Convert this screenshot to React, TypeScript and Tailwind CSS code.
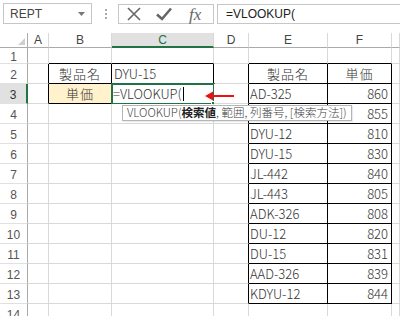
import React from 'react';

type Col = { k: string; w: string };
const COLS: Col[] = [
  { k: 'A', w: 'w-[21px]' },
  { k: 'B', w: 'w-[63px]' },
  { k: 'C', w: 'w-[102px]' },
  { k: 'D', w: 'w-[35px]' },
  { k: 'E', w: 'w-[79px]' },
  { k: 'F', w: 'w-[64px]' },
  { k: 'G', w: 'w-[8px]' },
];

const TABLE: Record<number, [string, string]> = {
  2: ['製品名', '単価'],
  3: ['AD-325', '860'],
  4: ['', '855'],
  5: ['DYU-12', '810'],
  6: ['DYU-15', '830'],
  7: ['JL-442', '840'],
  8: ['JL-443', '805'],
  9: ['ADK-326', '808'],
  10: ['DU-12', '820'],
  11: ['DU-15', '831'],
  12: ['AAD-326', '839'],
  13: ['KDYU-12', '844'],
};

const inBox = (r: number, c: string) =>
  (r >= 2 && r <= 3 && (c === 'B' || c === 'C')) ||
  (r >= 2 && r <= 13 && (c === 'E' || c === 'F'));

const nextCol = (c: string) => {
  const i = COLS.findIndex((x) => x.k === c);
  return i >= 0 && i < COLS.length - 1 ? COLS[i + 1].k : '';
};

const cellFont = { fontFamily: '"Noto Sans CJK JP", "Noto Sans", sans-serif' };

function CellContent({ r, c }: { r: number; c: string }) {
  if (r === 2 && c === 'B') return <span className="w-full text-center tracking-[1px]">製品名</span>;
  if (r === 2 && c === 'C') return <span className="pl-[2px]">DYU-15</span>;
  if (r === 3 && c === 'B') return <span className="w-full text-center tracking-[1px]">単価</span>;
  if (r === 3 && c === 'C')
    return (
      <>
        <span className="pl-[1px] flex items-center">
          =VLOOKUP(
          <span className="inline-block w-[1px] h-[14px] bg-black ml-[1px]" />
        </span>
        <div className="absolute -left-[1px] -top-[1px] w-[104px] h-[22px] border-2 border-[#217346]" />
        <div className="absolute left-[99px] top-[17px] w-[6px] h-[6px] bg-[#217346] border border-white" />
      </>
    );
  const t = TABLE[r];
  if (t && c === 'E') {
    if (r === 2) return <span className="w-full text-center tracking-[1px]">{t[0]}</span>;
    return <span className="pl-[1px]">{t[0]}</span>;
  }
  if (t && c === 'F') {
    if (r === 2) return <span className="w-full text-center tracking-[1px]">{t[1]}</span>;
    return <span className="w-full text-right pr-[3px]">{t[1]}</span>;
  }
  return null;
}

function Row({ r }: { r: number }) {
  const h = r === 1 ? 'h-[16px]' : 'h-[20px]';
  const sel = r === 3;
  return (
    <div className={`flex shrink-0 ${h}`}>
      <div
        className={`w-[28px] shrink-0 flex items-center justify-center border-b border-b-[#e0e0e0] text-[12px] ${
          sel ? 'bg-[#e1e1e1] border-r-2 border-r-[#217346] text-[#333]' : 'bg-white border-r border-r-[#ababab] text-[#555]'
        }`}
        style={{ fontFamily: '"Liberation Sans", Arial, sans-serif' }}
      >
        <span className="pt-[2px]">{r}</span>
      </div>
      {COLS.map((col) => {
        const rB = inBox(r, col.k) || inBox(r, nextCol(col.k));
        const bB = inBox(r, col.k) || inBox(r + 1, col.k);
        const yellow = r === 3 && col.k === 'B';
        return (
          <div
            key={col.k}
            className={`relative shrink-0 ${col.w} flex items-center overflow-visible whitespace-nowrap text-[13px] font-light text-[#333] border-r border-b ${
              rB ? 'border-r-black' : 'border-r-[#d9d9d9]'
            } ${bB ? 'border-b-black' : 'border-b-[#d9d9d9]'} ${yellow ? 'bg-[#fff2cc]' : 'bg-white'}`}
            style={cellFont}
          >
            <CellContent r={r} c={col.k} />
          </div>
        );
      })}
    </div>
  );
}

export default function App() {
  const rows = Array.from({ length: 14 }, (_, i) => i + 1);
  return (
    <div className="relative w-[400px] h-[316px] overflow-hidden bg-white">
      {/* formula bar */}
      <div className="flex items-start h-[33px] bg-white">
        <div
          className="ml-[3px] mt-[3px] w-[89px] h-[21px] border border-[#c6c6c6] bg-white flex items-center justify-between pl-[6px] pr-[6px] text-[12px] text-[#444]"
          style={{ fontFamily: '"Liberation Sans", Arial, sans-serif' }}
        >
          <span>REPT</span>
          <svg width="7" height="4" viewBox="0 0 7 4">
            <path d="M0 0 L7 0 L3.5 4 Z" fill="#777" />
          </svg>
        </div>
        <div className="ml-[13px] mt-[9px] flex flex-col gap-[2px]">
          <div className="w-[2px] h-[2px] bg-[#aaa]" />
          <div className="w-[2px] h-[2px] bg-[#aaa]" />
          <div className="w-[2px] h-[2px] bg-[#aaa]" />
        </div>
        <div className="ml-[11px] mt-[4px] w-[96px] h-[20px] border border-[#c6c6c6] bg-white flex items-center">
          <svg className="ml-[8px]" width="14" height="14" viewBox="0 0 14 14">
            <path d="M1 1 L13 13 M13 1 L1 13" stroke="#666" strokeWidth="1.6" fill="none" />
          </svg>
          <svg className="ml-[15px]" width="16" height="14" viewBox="0 0 16 14">
            <path d="M1 7.5 L6 12 L15 1.5" stroke="#666" strokeWidth="2.6" fill="none" />
          </svg>
          <span
            className="ml-[17px] text-[17px] italic text-[#666] leading-none"
            style={{ fontFamily: '"Liberation Serif", "Times New Roman", serif' }}
          >
            fx
          </span>
        </div>
        <div
          className="ml-[3px] mt-[4px] flex-1 h-[20px] border border-r-0 border-[#c6c6c6] bg-white flex items-center pl-[8px] text-[12px] text-[#222]"
          style={{ fontFamily: '"Liberation Sans", Arial, sans-serif' }}
        >
          =VLOOKUP(
        </div>
      </div>

      {/* column headers */}
      <div
        className="flex h-[15px] text-[12px] text-[#444]"
        style={{ fontFamily: '"Liberation Sans", Arial, sans-serif' }}
      >
        <div className="w-[28px] shrink-0 border-r border-r-[#ababab] border-b border-b-[#ababab] flex items-end justify-end pr-[2px] pb-[2px]">
          <svg width="7" height="7" viewBox="0 0 7 7">
            <path d="M7 0 L7 7 L0 7 Z" fill="#cfcfcf" />
          </svg>
        </div>
        {COLS.map((col) => (
          <div
            key={col.k}
            className={`shrink-0 ${col.w} flex items-center justify-center border-r border-r-[#d9d9d9] ${
              col.k === 'C'
                ? 'bg-[#e1e1e1] border-b-2 border-b-[#217346] text-[#217346]'
                : 'bg-white border-b border-b-[#ababab]'
            }`}
          >
            {col.k === 'G' ? '' : col.k}
          </div>
        ))}
      </div>

      {rows.map((r) => (
        <Row key={r} r={r} />
      ))}

      {/* red arrow */}
      <svg className="absolute left-[204px] top-[90px]" width="32" height="12" viewBox="0 0 32 12">
        <path d="M6 6 L30 6" stroke="#ee1111" strokeWidth="2" />
        <path d="M1 6 L9 1.5 L9 10.5 Z" fill="#ee1111" />
      </svg>

      {/* function tooltip */}
      <div
        className="absolute left-[122px] top-[105px] h-[16px] border border-[#b5b5b5] bg-white flex items-center pl-[4px] pr-[4px] text-[11.5px] font-light text-[#444] whitespace-nowrap shadow-[1px_1px_1px_rgba(0,0,0,0.08)]"
        style={cellFont}
      >
        VLOOKUP(<b className="font-bold text-[#222]">検索値</b>,&nbsp;範囲,&nbsp;列番号,&nbsp;[検索方法])
      </div>
    </div>
  );
}
